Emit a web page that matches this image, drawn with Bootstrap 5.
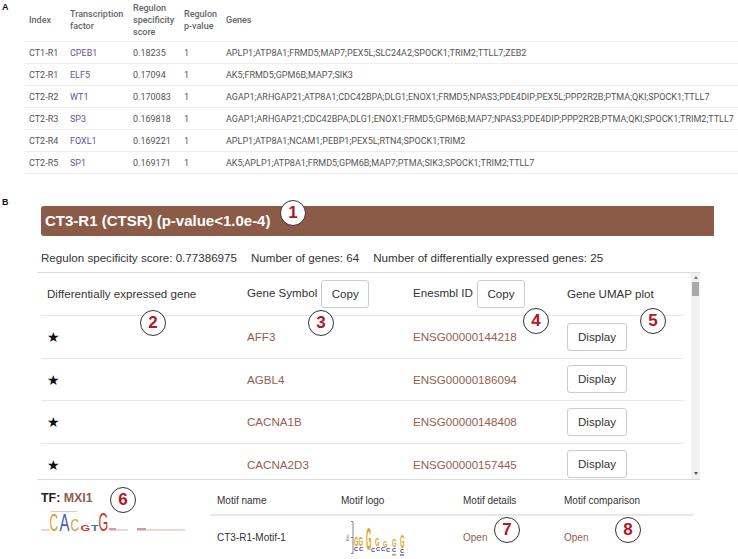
<!DOCTYPE html>
<html lang="en">
<head>
    <meta charset="UTF-8">
    <meta name="viewport" content="width=device-width, initial-scale=1.0">
    <title>Regulon details</title>
    <link href="https://cdn.jsdelivr.net/npm/bootstrap@5.3.2/dist/css/bootstrap.min.css" rel="stylesheet">
    <style>
        html, body { height: 559px; overflow: hidden; }
        body { background: #fff; font-family: "Liberation Sans", Arial, sans-serif; color: #333; position: relative; }
        .panel-label { width: 25px; flex: none; padding: 0 0 0 2px; font: bold 9px/10px "Liberation Sans", Arial, sans-serif; color: #111; }
        .panel-a { height: 197px; }
        .panel-a .panel-label { padding-top: 2px; }
        .panel-b .panel-label { width: 41px; }
        .panel-body { flex: 1; min-width: 0; }

        .regulon-table { font: 400 9px/12px Roboto, sans-serif; color: #555; margin: 0; width: 713px; table-layout: fixed; }
        .regulon-table th, .regulon-table td { padding: 5px 0 4px 4px; border-bottom: 1.5px solid #eee; vertical-align: middle; white-space: nowrap; color: #555; }
        .regulon-table thead th { font-weight: 500; color: #666; padding: 0 0 1px 4px; height: 41px; }
        .regulon-table td { height: 22px; }
        .regulon-table td a { color: #6a4f9c; text-decoration: none; }
        .col-index { width: 41px; } .col-tf { width: 63px; } .col-score { width: 51px; } .col-pv { width: 42px; }

        .panel-b .panel-body { padding-top: 9px; }
        .regulon-banner { width: 673px; height: 30px; background: #8b5b48; color: #fff; font: bold 15px/30px "Liberation Sans", Arial, sans-serif; padding-left: 4px; border-radius: 3px 0 0 3px; }
        .regulon-stats { font-size: 11.6px; line-height: 17px; padding: 13px 0 6px; color: #333; gap: 14px; }

        .gene-scroll { width: 663px; height: 208px; margin-left: -4px; padding-left: 4px; overflow: hidden; position: relative; border-top: 1px solid #ddd; border-bottom: 1px solid #ddd; }
        .gene-scrollbar { position: absolute; top: 0; right: 0; bottom: 0; width: 9px; background: #f0f0f0; display: flex; flex-direction: column; align-items: center; }
        .gene-arrow-up { width: 0; height: 0; margin-top: 3px; border: 2.5px solid transparent; border-top: 0; border-bottom: 3px solid #777; }
        .gene-thumb { width: 7px; height: 14px; margin-top: 3px; background: #a9a9a9; }
        .gene-arrow-down { width: 0; height: 0; margin-top: auto; margin-bottom: 4px; border: 2.5px solid transparent; border-bottom: 0; border-top: 3px solid #555; }
        .gene-grid { width: 643px; margin: 0; table-layout: fixed; font-size: 11.6px; }
        .gene-grid th, .gene-grid td { padding: 0 0 0 6px; height: 42.5px; vertical-align: middle; border-bottom: 1.5px solid #e8e8e8; font-weight: 400; color: #333; }
        .gene-grid a { color: #96604c; text-decoration: none; }
        .gene-col1 { width: 200px; } .gene-col2 { width: 166px; } .gene-col3 { width: 154px; }
        .gene-star { font-size: 14px; color: #111; line-height: 1; position: relative; top: 1px; }
        .gene-btn { font-size: 11.6px; padding: 0; height: 28px; line-height: 26px; border: 1px solid #ccc; border-radius: 3px; color: #333; background: #fff; }
        .gene-btn-copy { width: 48px; margin-left: 4px; }
        .gene-btn-show { width: 60px; }

        .tf-box { width: 169px; flex: none; padding-top: 11px; }
        .tf-title { font: bold 12.4px/14px "Liberation Sans", Arial, sans-serif; color: #222; }
        .tf-title span { color: #8b5f4d; }
        .tf-logo { display: block; margin-top: 5px; overflow: visible; }
        .motif-table { width: 483px; margin: 0; font-size: 10px; table-layout: fixed; }
        .motif-table th, .motif-table td { padding: 0 0 0 7px; font-weight: 400; color: #333; vertical-align: middle; border: 0; }
        .motif-table th { height: 35px; border-bottom: 2px solid #e8e8e8; padding-top: 6px; }
        .motif-table td { height: 44px; }
        .motif-table a { color: #96604c; text-decoration: none; }
        .motif-c1 { width: 124px; } .motif-c2 { width: 122px; } .motif-c3 { width: 101px; }
        .motif-logo { display: block; overflow: visible; }

        .callout { position: absolute; width: 26px; height: 26px; border-radius: 50%; background: #fff; border: 1px solid #333; color: #b3161f; font: bold 17px/24px "Liberation Sans", Arial, sans-serif; text-align: center; }
        .callout-1 { left: 280px; top: 200px; } .callout-2 { left: 140px; top: 310px; }
        .callout-3 { left: 308px; top: 310px; } .callout-4 { left: 523px; top: 308px; }
        .callout-5 { left: 640px; top: 308px; } .callout-6 { left: 110px; top: 487px; }
        .callout-7 { left: 494px; top: 517px; } .callout-8 { left: 615px; top: 517px; }
        .logo-c { fill: #e09a2c; } .logo-a { fill: #3f5fc0; } .logo-g { fill: #cf3a2a; } .logo-t { fill: #3a74b8; }
        .logo-y { fill: #dfa32e; } .logo-b { fill: #3840a8; }
    </style>
</head>
<body>
    <div class="panel-a d-flex">
        <div class="panel-label">A</div>
        <div class="panel-body">
            <table class="table regulon-table">
                <colgroup><col class="col-index"><col class="col-tf"><col class="col-score"><col class="col-pv"><col></colgroup>
                <thead>
                    <tr><th>Index</th><th>Transcription<br>factor</th><th>Regulon<br>specificity<br>score</th><th>Regulon<br>p-value</th><th>Genes</th></tr>
                </thead>
                <tbody>
                    <tr><td>CT1-R1</td><td><a href="#">CPEB1</a></td><td>0.18235</td><td>1</td><td>APLP1;ATP8A1;FRMD5;MAP7;PEX5L;SLC24A2;SPOCK1;TRIM2;TTLL7;ZEB2</td></tr>
                    <tr><td>CT2-R1</td><td><a href="#">ELF5</a></td><td>0.17094</td><td>1</td><td>AK5;FRMD5;GPM6B;MAP7;SIK3</td></tr>
                    <tr><td>CT2-R2</td><td><a href="#">WT1</a></td><td>0.170083</td><td>1</td><td>AGAP1;ARHGAP21;ATP8A1;CDC42BPA;DLG1;ENOX1;FRMD5;NPAS3;PDE4DIP;PEX5L;PPP2R2B;PTMA;QKI;SPOCK1;TTLL7</td></tr>
                    <tr><td>CT2-R3</td><td><a href="#">SP3</a></td><td>0.169818</td><td>1</td><td>AGAP1;ARHGAP21;CDC42BPA;DLG1;ENOX1;FRMD5;GPM6B;MAP7;NPAS3;PDE4DIP;PPP2R2B;PTMA;QKI;SPOCK1;TRIM2;TTLL7</td></tr>
                    <tr><td>CT2-R4</td><td><a href="#">FOXL1</a></td><td>0.169221</td><td>1</td><td>APLP1;ATP8A1;NCAM1;PEBP1;PEX5L;RTN4;SPOCK1;TRIM2</td></tr>
                    <tr><td>CT2-R5</td><td><a href="#">SP1</a></td><td>0.169171</td><td>1</td><td>AK5;APLP1;ATP8A1;FRMD5;GPM6B;MAP7;PTMA;SIK3;SPOCK1;TRIM2;TTLL7</td></tr>
                </tbody>
            </table>
        </div>
    </div>

    <div class="panel-b d-flex">
        <div class="panel-label">B</div>
        <div class="panel-body">
            <div class="regulon-banner">CT3-R1 (CTSR) (p-value&lt;1.0e-4)</div>
            <div class="regulon-stats d-flex">
                <span>Regulon specificity score: 0.77386975</span>
                <span>Number of genes: 64</span>
                <span>Number of differentially expressed genes: 25</span>
            </div>
            <div class="gene-scroll">
                <table class="table gene-grid">
                    <colgroup><col class="gene-col1"><col class="gene-col2"><col class="gene-col3"><col></colgroup>
                    <thead>
                        <tr>
                            <th>Differentially expressed gene</th>
                            <th>Gene Symbol<button class="btn gene-btn gene-btn-copy">Copy</button></th>
                            <th>Enesmbl ID<button class="btn gene-btn gene-btn-copy">Copy</button></th>
                            <th>Gene UMAP plot</th>
                        </tr>
                    </thead>
                    <tbody>
                        <tr><td><span class="gene-star">★</span></td><td><a href="#">AFF3</a></td><td><a href="#">ENSG00000144218</a></td><td><button class="btn gene-btn gene-btn-show">Display</button></td></tr>
                        <tr><td><span class="gene-star">★</span></td><td><a href="#">AGBL4</a></td><td><a href="#">ENSG00000186094</a></td><td><button class="btn gene-btn gene-btn-show">Display</button></td></tr>
                        <tr><td><span class="gene-star">★</span></td><td><a href="#">CACNA1B</a></td><td><a href="#">ENSG00000148408</a></td><td><button class="btn gene-btn gene-btn-show">Display</button></td></tr>
                        <tr><td><span class="gene-star">★</span></td><td><a href="#">CACNA2D3</a></td><td><a href="#">ENSG00000157445</a></td><td><button class="btn gene-btn gene-btn-show">Display</button></td></tr>
                    </tbody>
                </table>
                <div class="gene-scrollbar">
                    <div class="gene-arrow-up"></div>
                    <div class="gene-thumb"></div>
                    <div class="gene-arrow-down"></div>
                </div>
            </div>
            <div class="d-flex">
                <div class="tf-box">
                    <div class="tf-title">TF: <span>MXI1</span></div>
                    <svg class="tf-logo" width="146" height="22" viewBox="0 0 146 22" font-family="Liberation Sans, Arial, sans-serif">
                        <rect x="0" y="19.5" width="9" height="1" fill="#dcb0a2"/>
                        <rect x="10" y="1" width="26" height="1" fill="#eac4bc"/>
                        <text class="logo-c" transform="translate(8.5,20.5) scale(1.2,2.35)" font-size="10">C</text>
                        <text class="logo-a" transform="translate(18.5,20.5) scale(1.5,2.35)" font-size="10">A</text>
                        <text class="logo-c" transform="translate(29.5,20.5) scale(1.2,1.6)" font-size="10">C</text>
                        <text class="logo-g" transform="translate(39.5,20.5) scale(1.25,.95)" font-size="10" font-weight="bold">G</text>
                        <text class="logo-t" transform="translate(50,20.5) scale(1.25,.95)" font-size="10" font-weight="bold">T</text>
                        <text class="logo-g" transform="translate(57.5,20.5) scale(1.25,2.5)" font-size="10">G</text>
                        <rect x="68" y="18" width="7" height="2.5" fill="#dc9a94"/>
                        <rect x="75" y="19.5" width="12" height="1" fill="#dcb0a2"/>
                        <rect x="96" y="18" width="9" height="2.5" fill="#d09aa0"/>
                        <rect x="105" y="19.5" width="39" height="1" fill="#dcb0a2"/>
                    </svg>
                </div>
                <table class="table motif-table">
                    <colgroup><col class="motif-c1"><col class="motif-c2"><col class="motif-c3"><col></colgroup>
                    <thead><tr><th>Motif name</th><th>Motif logo</th><th>Motif details</th><th>Motif comparison</th></tr></thead>
                    <tbody>
                        <tr>
                            <td>CT3-R1-Motif-1</td>
                            <td>
                                <svg class="motif-logo" width="66" height="39" viewBox="0 0 66 39" font-family="Liberation Sans, Arial, sans-serif" font-weight="bold">
                                    <path d="M10 3.5h2v32h-2M10 19.5h2" fill="none" stroke="#666" stroke-width=".8"/>
                                    <text transform="translate(8,23) rotate(-90)" font-size="4" font-weight="400" fill="#666">Bits</text>
                                    <text class="logo-y" transform="translate(13,28) scale(.58,1.37)" font-size="10">G</text>
                                    <text class="logo-y" transform="translate(17.5,28) scale(.58,1.37)" font-size="10">G</text>
                                    <text class="logo-y" transform="translate(25,32) scale(.7,3.15)" font-size="10">G</text>
                                    <text class="logo-y" transform="translate(34,28) scale(.58,1.1)" font-size="10">G</text>
                                    <text class="logo-y" transform="translate(42,29) scale(.58,.96)" font-size="10">G</text>
                                    <text class="logo-y" transform="translate(51,29) scale(.58,1.1)" font-size="10">G</text>
                                    <text class="logo-y" transform="translate(59,30) scale(.58,1.8)" font-size="10">G</text>
                                    <text class="logo-b" transform="translate(13,33) scale(.58,.6)" font-size="10">C</text>
                                    <text class="logo-b" transform="translate(18,33) scale(.58,.6)" font-size="10">C</text>
                                    <text class="logo-b" transform="translate(30,34) scale(.58,.6)" font-size="10">C</text>
                                    <text class="logo-b" transform="translate(35,33) scale(.58,.6)" font-size="10">C</text>
                                    <text class="logo-b" transform="translate(40,33) scale(.58,.5)" font-size="10">C</text>
                                    <text class="logo-b" transform="translate(45,34) scale(.58,.6)" font-size="10">C</text>
                                    <text class="logo-b" transform="translate(51,34) scale(.58,.6)" font-size="10">C</text>
                                    <text class="logo-b" transform="translate(59,35) scale(.58,.6)" font-size="10">C</text>
                                    <rect x="51" y="36" width="4" height="1.5" fill="#9a9aa8"/>
                                    <rect x="59" y="36" width="4" height="2" fill="#9a9aa8"/>
                                </svg>
                            </td>
                            <td><a href="#">Open</a></td>
                            <td><a href="#">Open</a></td>
                        </tr>
                    </tbody>
                </table>
            </div>
        </div>
    </div>

    <span class="callout callout-1">1</span>
    <span class="callout callout-2">2</span>
    <span class="callout callout-3">3</span>
    <span class="callout callout-4">4</span>
    <span class="callout callout-5">5</span>
    <span class="callout callout-6">6</span>
    <span class="callout callout-7">7</span>
    <span class="callout callout-8">8</span>
</body>
</html>
